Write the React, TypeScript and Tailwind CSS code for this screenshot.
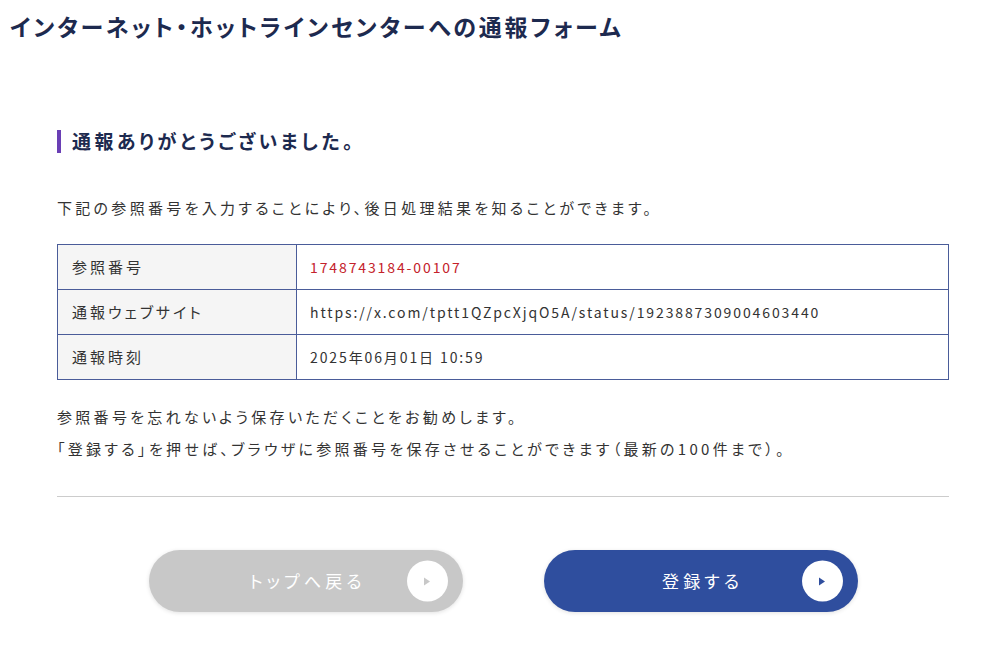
import React from 'react';

const FONT = "font-['Noto_Sans_CJK_JP','Noto_Sans',sans-serif]";

interface InfoRow {
  label: string;
  value: string;
  highlight?: boolean;
}

const ROWS: InfoRow[] = [
  { label: '参照番号', value: '1748743184-00107', highlight: true },
  { label: '通報ウェブサイト', value: 'https://x.com/tptt1QZpcXjqO5A/status/1923887309004603440' },
  { label: '通報時刻', value: '2025年06月01日 10:59' },
];

const PillButton: React.FC<{ label: string; disabled?: boolean }> = ({ label, disabled }) => (
  <button
    className={
      disabled
        ? 'relative w-[314px] h-[62px] rounded-full bg-[#c8c8c8] text-white text-[17px] tracking-[0.24em] shadow-[0_1px_4px_rgba(0,0,0,0.12)]'
        : 'relative w-[314px] h-[62px] rounded-full bg-[#2f4e9e] text-white text-[17px] tracking-[0.24em] shadow-[0_1px_4px_rgba(0,0,0,0.12)]'
    }
  >
    <span className="pl-[0.24em]">{label}</span>
    <span className="absolute right-[15px] top-1/2 -translate-y-1/2 w-[41px] h-[41px] rounded-full bg-white flex items-center justify-center">
      <svg width="8" height="10" viewBox="0 0 8 10">
        <polygon points="1,1 7,5 1,9" fill={disabled ? '#c8c8c8' : '#2f4e9e'} />
      </svg>
    </span>
  </button>
);

export default function App() {
  return (
    <div className={`${FONT} bg-white min-h-[646px] text-[#333] [font-feature-settings:'palt']`}>
      <h1 className="pt-[10px] pl-[10px] text-[23px] leading-[33px] font-bold tracking-[0.12em] text-[#1d2a4f]">
        インターネット・ホットラインセンターへの通報フォーム
      </h1>

      <div className="ml-[57px] w-[892px]">
        <h2 className="mt-[87px] h-[23px] flex items-center gap-[11px] text-[19px] font-bold tracking-[0.18em] text-[#1d2a4f]">
          <span className="w-[4px] h-[23px] bg-[#6a3fb5]" />
          通報ありがとうございました。
        </h2>

        <p className="mt-[43px] text-[15px] leading-[24px] tracking-[0.22em]">
          下記の参照番号を入力することにより、後日処理結果を知ることができます。
        </p>

        <table className="mt-[24px] w-full border-collapse border border-[#4a5c99]">
          <tbody>
            {ROWS.map((row) => (
              <tr key={row.label} className="h-[45px]">
                <td className="w-[239px] border border-[#4a5c99] bg-[#f5f5f5] pl-[14px] text-[15px] tracking-[0.2em]">
                  {row.label}
                </td>
                <td
                  className={
                    row.highlight
                      ? 'border border-[#4a5c99] pl-[13px] text-[14px] tracking-[0.135em] text-[#c4222b]'
                      : 'border border-[#4a5c99] pl-[13px] text-[14px] tracking-[0.135em] text-[#333]'
                  }
                >
                  {row.value}
                </td>
              </tr>
            ))}
          </tbody>
        </table>

        <div className="mt-[21px] text-[15px] leading-[32px] tracking-[0.22em]">
          <p>参照番号を忘れないよう保存いただくことをお勧めします。</p>
          <p>「登録する」を押せば、ブラウザに参照番号を保存させることができます（最新の100件まで）。</p>
        </div>

        <div className="mt-[31px] h-px bg-[#cccccc]" />

        <div className="mt-[53px] flex justify-center gap-[81px]">
          <PillButton label="トップへ戻る" disabled />
          <PillButton label="登録する" />
        </div>
      </div>
    </div>
  );
}
